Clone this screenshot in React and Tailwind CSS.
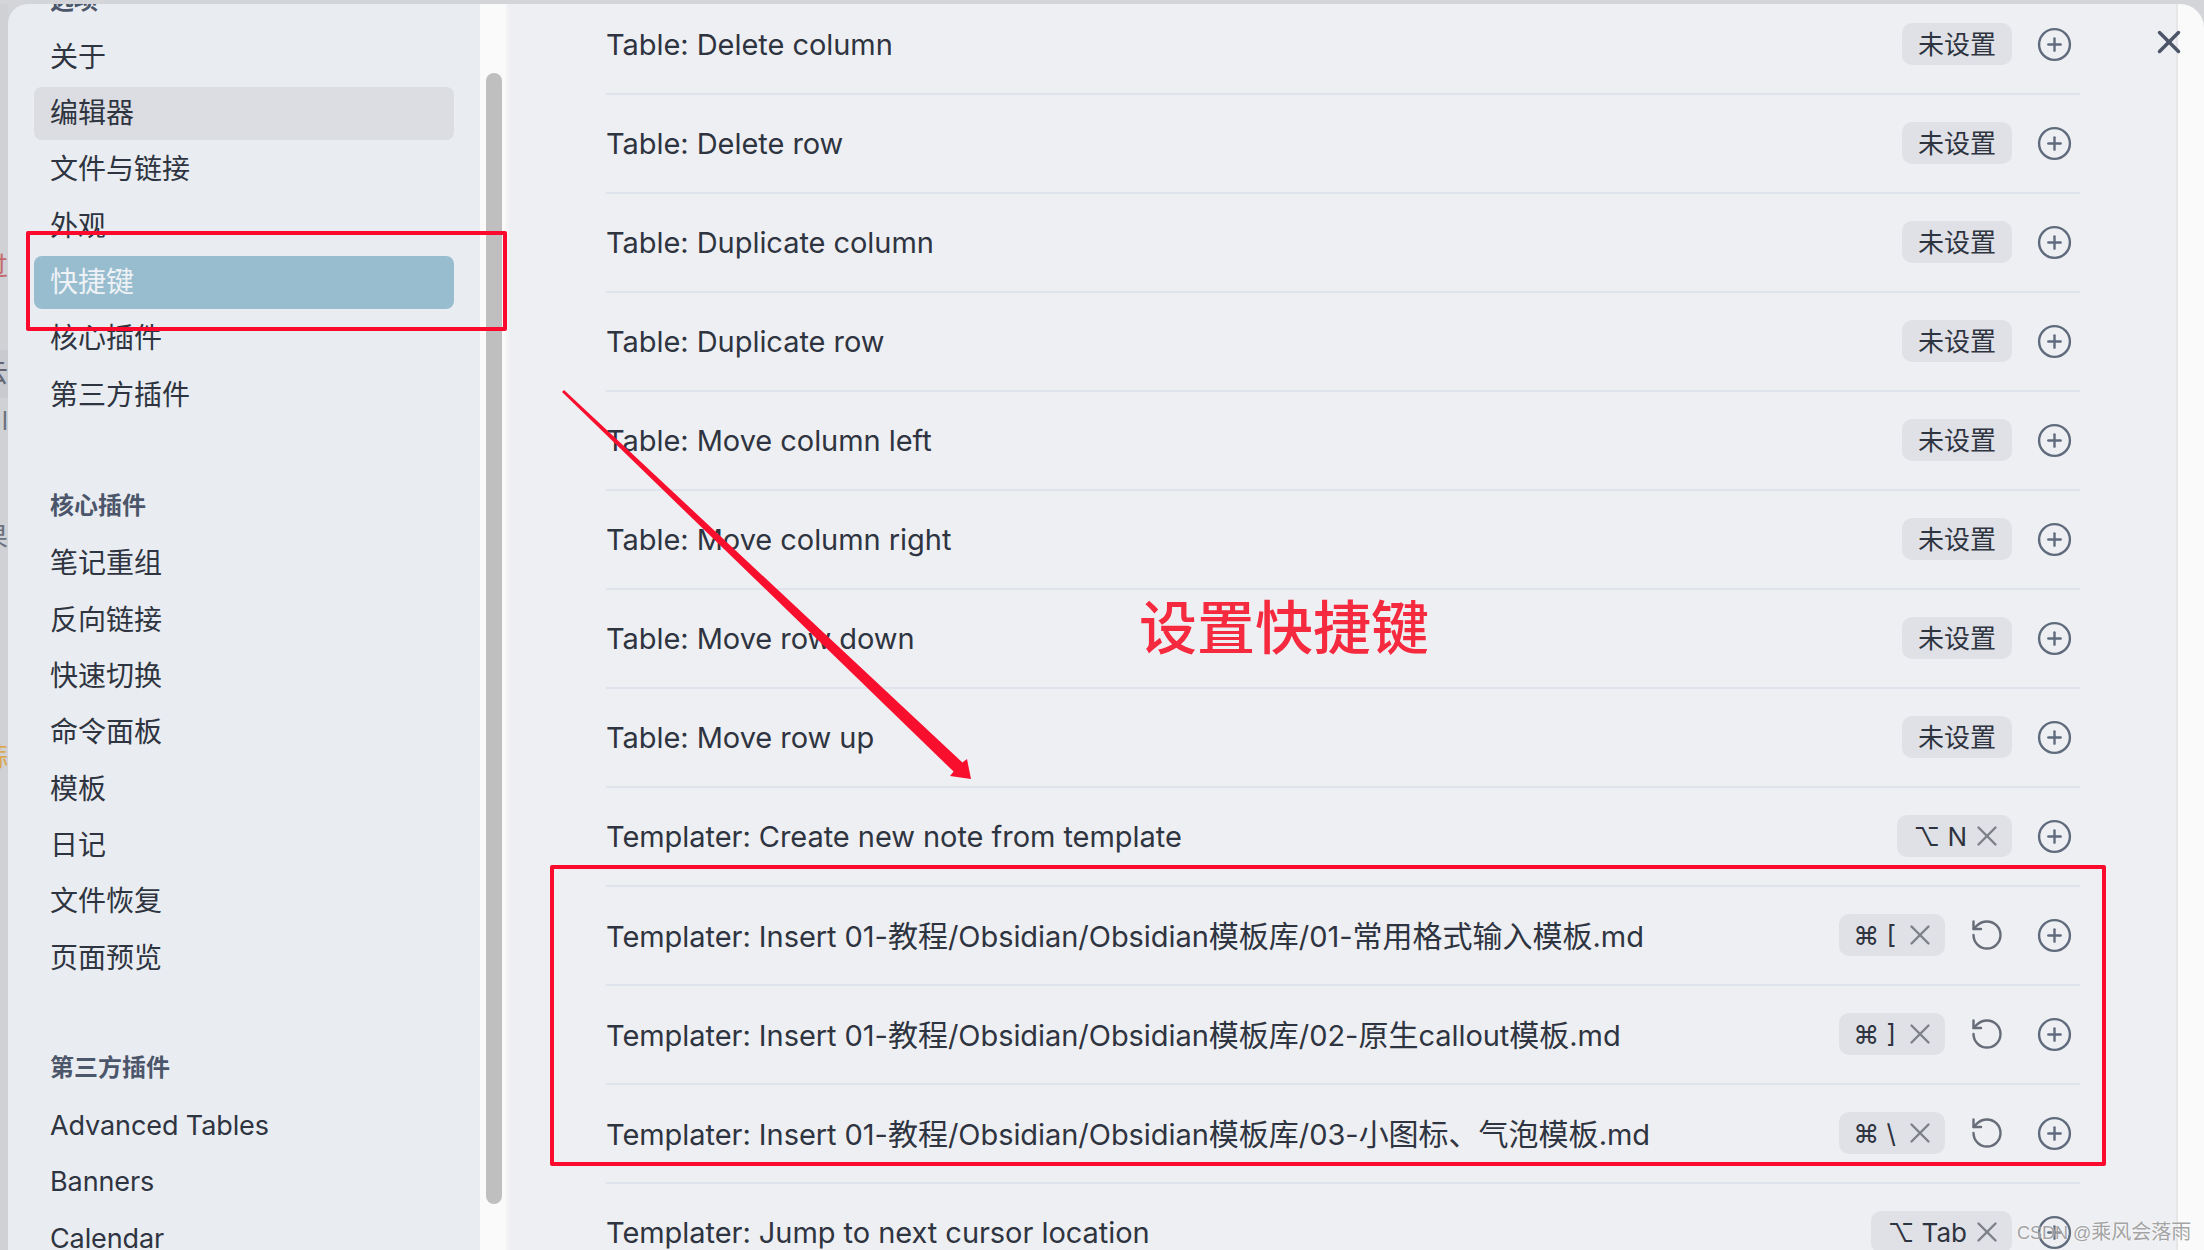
import React from "react";
import { CirclePlus, RotateCcw, X } from "lucide-react";

const FONT = 'font-["Inter","Noto_Sans_CJK_SC","DejaVu_Sans",sans-serif]';

const nav = [
  { label: "关于" },
  { label: "编辑器", state: "hover" },
  { label: "文件与链接" },
  { label: "外观" },
  { label: "快捷键", state: "active" },
  { label: "核心插件" },
  { label: "第三方插件" },
];
const core = ["笔记重组", "反向链接", "快速切换", "命令面板", "模板", "日记", "文件恢复", "页面预览"];
const third = ["Advanced Tables", "Banners", "Calendar"];

const rows = [
  { t: "Table: Delete column" },
  { t: "Table: Delete row" },
  { t: "Table: Duplicate column" },
  { t: "Table: Duplicate row" },
  { t: "Table: Move column left" },
  { t: "Table: Move column right" },
  { t: "Table: Move row down" },
  { t: "Table: Move row up" },
  { t: "Templater: Create new note from template", k: "⌥ N" },
  { t: "Templater: Insert 01-教程/Obsidian/Obsidian模板库/01-常用格式输入模板.md", k: "⌘ [", r: true },
  { t: "Templater: Insert 01-教程/Obsidian/Obsidian模板库/02-原生callout模板.md", k: "⌘ ]", r: true },
  { t: "Templater: Insert 01-教程/Obsidian/Obsidian模板库/03-小图标、气泡模板.md", k: "⌘ \\", r: true },
  { t: "Templater: Jump to next cursor location", k: "⌥ Tab" },
];

// Latin text is a little narrower than the CJK text beside it in the reference.
function Mixed({ text, cjk }) {
  return text.split(/([\u3000-\u9fff\uff00-\uffef]+)/).map((part, i) =>
    i % 2 ? (
      <span key={i} className={cjk}>
        {part}
      </span>
    ) : (
      part
    ),
  );
}

function NavItem({ label, state }) {
  const tone =
    state === "active"
      ? "bg-[#97bdcf] text-[#eef1f5]"
      : state === "hover"
        ? "bg-[#dcdde2] text-[#2e3440]"
        : "text-[#2e3440]";
  return (
    <div className={`h-[53px] shrink-0 flex items-center px-[16px] rounded-[8px] text-[27px] tracking-[-0.1px] leading-none ${tone}`}>
      <span>
        <Mixed text={label} cjk="text-[28px] tracking-normal" />
      </span>
    </div>
  );
}

function Heading({ children, className }) {
  return (
    <div className={`h-[53px] shrink-0 flex items-center px-[16px] text-[24px] font-bold text-[#4c566a] ${className}`}>
      {children}
    </div>
  );
}

function Row({ t, k, r }) {
  return (
    <div className="h-[99px] shrink-0 flex items-center justify-between pr-[7px] border-b-2 border-[#dfe3eb]">
      <div className="text-[29px] tracking-[-0.05px] leading-none text-[#2e3440] whitespace-nowrap">
        <Mixed text={t} cjk="text-[30px] tracking-normal" />
      </div>
      <div className="flex items-center -mt-[1px]">
        {k ? (
          <div className={`h-[42px] flex items-center ${r ? "pl-[14px]" : "pl-[17px]"} pr-[8px] rounded-[10px] bg-[#e0e1e6] text-[26px] text-[#2e3440] whitespace-pre`}>
            <span>{k}</span>
            <X size={34} strokeWidth={1.7} className={`${r ? "ml-[7px]" : "ml-[3px]"} text-[#7e8189]`} />
          </div>
        ) : (
          <div className="h-[42px] flex items-center px-[16px] rounded-[10px] bg-[#e0e1e6] text-[26px] text-[#2e3440]">
            未设置
          </div>
        )}
        {r && <RotateCcw size={36} strokeWidth={1.6} className="ml-[24px] mr-[-1px] text-[#666c78]" />}
        <CirclePlus size={37} strokeWidth={1.55} className={`${r ? "ml-[32px]" : "ml-[24px]"} text-[#5f6b7c]`} />
      </div>
    </div>
  );
}

function Bleed({ top, className, children }) {
  return (
    <div className={`absolute right-0 text-[26px] leading-none whitespace-nowrap ${top} ${className}`}>{children}</div>
  );
}

export default function App() {
  return (
    <div className={`relative w-[2204px] h-[1250px] overflow-hidden bg-[#d3d5d9] pt-[4px] flex ${FONT}`}>
      {/* window behind the dialog, visible as a thin strip */}
      <div className="relative w-[8px] shrink-0 overflow-hidden bg-[#d0d1d5]">
        <div className="absolute left-0 right-0 top-[346px] h-[48px] bg-[#c8cad0]"></div>
        <Bleed top="top-[250px]" className="text-[#c46a6f]">过</Bleed>
        <Bleed top="top-[356px]" className="text-[#5f6571]">云</Bleed>
        <Bleed top="top-[404px]" className="text-[#6b7280]">nl</Bleed>
        <Bleed top="top-[476px]" className="text-[#6b7280]">、</Bleed>
        <Bleed top="top-[520px]" className="text-[#6b7280]">果</Bleed>
        <Bleed top="top-[740px]" className="text-[#d9a94f]">蒜</Bleed>
      </div>

      {/* left sidebar */}
      <div className="w-[472px] shrink-0 bg-[#e9ecf1] rounded-tl-[20px] overflow-hidden flex flex-col gap-[3.33px] px-[26px]">
        <Heading className="-mt-[30px]">选项</Heading>
        {nav.map((n) => (
          <NavItem key={n.label} {...n} />
        ))}
        <Heading className="mt-[55px] mb-[1px]">核心插件</Heading>
        {core.map((l) => (
          <NavItem key={l} label={l} />
        ))}
        <Heading className="mt-[54px] mb-[1px]">第三方插件</Heading>
        {third.map((l) => (
          <NavItem key={l} label={l} />
        ))}
      </div>

      {/* scrollbar gutter */}
      <div className="w-[26px] shrink-0 bg-[#fafafa] pl-[6px] pt-[69px]">
        <div className="w-[16px] h-[1131px] rounded-full bg-[#bfbfbf]"></div>
      </div>

      {/* content */}
      <div className="w-[1672px] shrink-0 bg-[#eeeff3] border-l-[3px] border-r-2 border-l-[#f3f3f6] border-r-[#e6e6e9] overflow-hidden pl-[97px] pr-[96px]">
        <div className="flex flex-col -mt-[8px]">
          {rows.map((r) => (
            <Row key={r.t} {...r} />
          ))}
        </div>
      </div>

      {/* right margin */}
      <div className="relative flex-1 bg-[#fafafa] rounded-tr-[24px]"></div>

      {/* annotations and overlays */}
      <X size={38} strokeWidth={2.2} className="absolute left-[2150px] top-[23px] text-[#4c5568]" />
      <div className="absolute left-[26px] top-[231px] w-[481px] h-[100px] border-[4px] border-[#fb0a2e] rounded-[2px]"></div>
      <div className="absolute left-[550px] top-[865px] w-[1556px] h-[301px] border-[4px] border-[#fb0a2e] rounded-[2px]"></div>
      <div className="absolute left-[1139px] top-[599px] text-[58px] font-medium leading-none text-[#f62a3e] whitespace-nowrap">设置快捷键</div>
      <svg className="absolute left-0 top-0 pointer-events-none" width="2204" height="1250" viewBox="0 0 2204 1250">
        <polygon points="562,392 564,390 962.4,762.4 967,759 971,779 950,776 953.6,771.6" fill="#f90f2e" />
      </svg>
      <div className='absolute left-[2017px] top-[1220px] font-["Liberation_Sans","Noto_Sans_CJK_SC",sans-serif] text-[18px] leading-[24px] text-[#8c8c8c]/80 [text-shadow:0_0_2px_#ffffff] whitespace-nowrap'>
        CSDN @<span className="text-[20px]">乘风会落雨</span>
      </div>
    </div>
  );
}
